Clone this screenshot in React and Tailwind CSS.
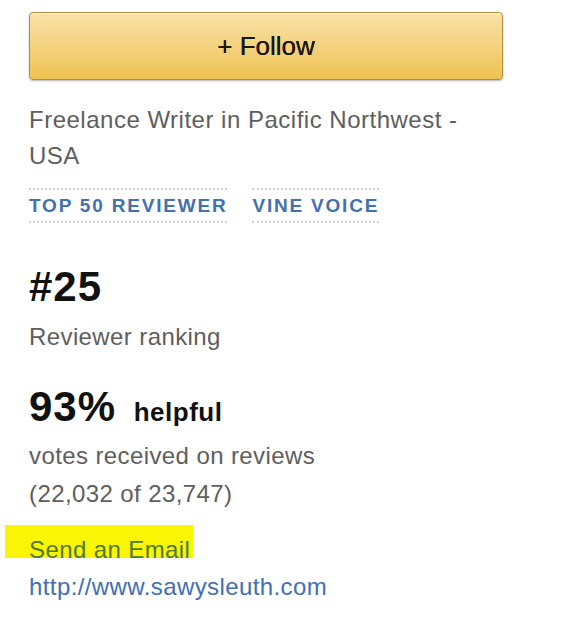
import React from "react";

const ReviewerCard = () => {
  return (
    <div className="min-h-[642px] w-[586px] bg-white pl-[29px] pt-[12px] font-['Liberation_Sans',Arial,sans-serif]">
      {/* Follow button */}
      <button className="flex h-[68px] w-[474px] items-center justify-center rounded-[4px] border border-[#b0903f] bg-gradient-to-b from-[#f8e2a8] to-[#efc24e] text-[26px] text-[#1a160c] shadow-[0_1px_2px_rgba(0,0,0,0.3),inset_0_1px_0_rgba(255,255,255,0.5)] [text-shadow:0_0_0.6px_#1a160c]">
        + Follow
      </button>

      {/* Bio */}
      <p className="mt-[22px] max-w-[470px] text-[24px] leading-[36px] tracking-[0.5px] text-[#5e5e5e]">
        Freelance Writer in Pacific Northwest - USA
      </p>

      {/* Badges */}
      <div className="mt-[14px] flex gap-[25px]">
        <span className="border-y-2 border-dotted border-[#cdd2da] text-[19px] font-bold uppercase leading-[31px] tracking-[1.8px] text-[#4470ae]">
          Top 50 Reviewer
        </span>
        <span className="border-y-2 border-dotted border-[#cdd2da] text-[19px] font-bold uppercase leading-[31px] tracking-[1.8px] text-[#4470ae]">
          Vine Voice
        </span>
      </div>

      {/* Ranking */}
      <div className="mt-[32px] text-[42px] font-bold leading-[64px] tracking-[1px] text-[#111]">
        #25
      </div>
      <div className="text-[24px] leading-[36px] tracking-[0.4px] text-[#5e5e5e]">
        Reviewer ranking
      </div>

      {/* Helpful votes */}
      <div className="mt-[22px] h-[60px] text-[42px] font-bold leading-[60px] tracking-[1px] text-[#111]">
        93%{" "}
        <span className="ml-[5px] text-[26px] leading-none tracking-[0.5px]">helpful</span>
      </div>
      <p className="text-[24px] leading-[38px] tracking-[0.4px] text-[#5e5e5e]">
        votes received on reviews
        <br />
        (22,032 of 23,747)
      </p>

      {/* Links */}
      <div className="mt-[12px] -ml-[24px] h-[33px] w-[188px] bg-[#f9f505] pl-[24px]">
        <span className="block pt-[13px] text-[24px] leading-[24px] tracking-[0.4px] text-[#4f7a2c]">
          Send an Email
        </span>
      </div>
      <div className="mt-[11px] text-[24px] leading-[36px] tracking-[0.4px] text-[#3f6fb5]">
        http://www.sawysleuth.com
      </div>
    </div>
  );
};

export default ReviewerCard;
